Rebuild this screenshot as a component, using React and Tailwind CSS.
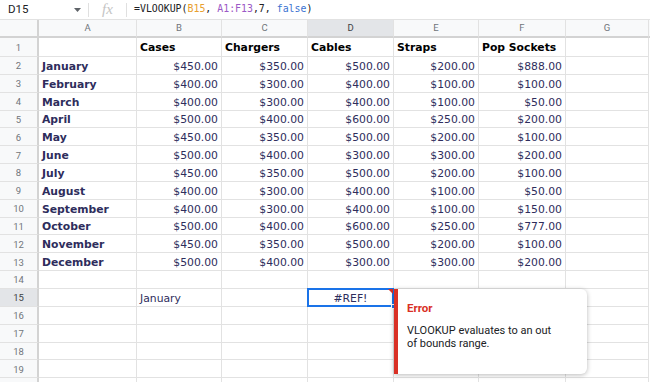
const COLS = [
  { letter: "A", w: "w-[98px]" },
  { letter: "B", w: "w-[85px]" },
  { letter: "C", w: "w-[86px]" },
  { letter: "D", w: "w-[86px]" },
  { letter: "E", w: "w-[85px]" },
  { letter: "F", w: "w-[87px]" },
  { letter: "G", w: "w-[83px]" },
];

const DATA = [
  ["January", 450, 350, 500, 200, 888],
  ["February", 400, 300, 400, 100, 100],
  ["March", 400, 300, 400, 100, 50],
  ["April", 500, 400, 600, 250, 200],
  ["May", 450, 350, 500, 200, 100],
  ["June", 500, 400, 300, 300, 200],
  ["July", 450, 350, 500, 200, 100],
  ["August", 400, 300, 400, 100, 50],
  ["September", 400, 300, 400, 100, 150],
  ["October", 500, 400, 600, 250, 777],
  ["November", 450, 350, 500, 200, 100],
  ["December", 500, 400, 300, 300, 200],
];

const money = (n) => `$${n.toFixed(2)}`;

const RowHead = ({ n, active }) => (
  <div
    className={`w-[39px] shrink-0 flex items-center justify-center pt-[2px] border-r-2 border-b border-r-[#d3d3d3] border-b-[#e2e2e2] text-[9.5px] font-['Roboto',sans-serif] ${
      active ? "bg-[#e3e5e8] text-[#3c4043]" : "bg-[#f8f9fa] text-[#70757a]"
    }`}
  >
    {n}
  </div>
);

const Cell = ({ w, children, align = "left", bold, dark, center, extra = "" }) => (
  <div
    className={`${w} shrink-0 h-full flex items-center border-r border-b border-[#e2e2e2] px-[3px] pt-[3px] whitespace-nowrap overflow-visible ${
      center ? "justify-center" : align === "right" ? "justify-end" : "justify-start"
    } ${bold ? "font-bold" : ""} ${dark ? "text-black" : "text-[#2e2d5c]"} ${extra}`}
  >
    {children}
  </div>
);

export default function App() {
  const rows = [];

  // header row (row 1)
  rows.push(
    <div key="r1" className="flex h-[19px]">
      <RowHead n={1} />
      <Cell w={COLS[0].w} />
      {["Cases", "Chargers", "Cables", "Straps", "Pop Sockets"].map((h, i) => (
        <Cell key={h} w={COLS[i + 1].w} bold dark>
          {h}
        </Cell>
      ))}
      <Cell w={COLS[6].w} />
    </div>
  );

  DATA.forEach((r, idx) => {
    rows.push(
      <div key={`r${idx + 2}`} className="flex h-[17.85px]">
        <RowHead n={idx + 2} />
        <Cell w={COLS[0].w} bold>
          {r[0]}
        </Cell>
        {r.slice(1).map((v, i) => (
          <Cell key={i} w={COLS[i + 1].w} align="right">
            {money(v)}
          </Cell>
        ))}
        <Cell w={COLS[6].w} />
      </div>
    );
  });

  for (let n = 14; n <= 20; n++) {
    rows.push(
      <div key={`r${n}`} className="flex h-[17.85px]">
        <RowHead n={n < 20 ? n : ""} active={n === 15} />
        <Cell w={COLS[0].w} />
        <Cell w={COLS[1].w}>{n === 15 ? "January" : null}</Cell>
        <Cell w={COLS[2].w} />
        {n === 15 ? (
          <Cell w={COLS[3].w} center extra="relative">
            #REF!
            <div className="absolute -left-px -top-px -right-px -bottom-px border-2 border-[#1a73e8]" />
            <div className="absolute right-0 top-0 w-0 h-0 border-t-[5px] border-l-[5px] border-t-[#d93025] border-l-transparent" />
            <div className="absolute -right-[3px] -bottom-[3px] w-[5px] h-[5px] bg-[#1a73e8] border border-white" />
          </Cell>
        ) : (
          <Cell w={COLS[3].w} />
        )}
        <Cell w={COLS[4].w} />
        <Cell w={COLS[5].w} />
        <Cell w={COLS[6].w} />
      </div>
    );
  }

  return (
    <div className="relative w-[650px] h-[382px] overflow-hidden bg-white font-['DejaVu_Sans',sans-serif] text-[10.8px]">
      {/* formula bar */}
      <div className="flex items-center h-[20px] border-b border-[#e2e2e2] font-['Roboto',sans-serif]">
        <div className="w-[88px] shrink-0 flex items-center justify-between pl-[8px] pr-[7px] text-[11.5px] text-[#202124]">
          <span>D15</span>
          <svg width="7" height="4" viewBox="0 0 7 4">
            <path d="M0 0h7L3.5 4z" fill="#5f6368" />
          </svg>
        </div>
        <div className="w-px h-[14px] bg-[#e0e0e0]" />
        <div className="w-[37px] shrink-0 flex items-center justify-center font-['Liberation_Serif',serif] italic text-[15px] text-[#c4c4c4] leading-none">
          fx
        </div>
        <div className="w-px h-[14px] bg-[#e0e0e0]" />
        <div className="pl-[7px] font-['DejaVu_Sans_Mono',monospace] text-[9.9px] text-[#202124] whitespace-nowrap">
          =VLOOKUP(<span className="text-[#e8a02f]">B15</span>, <span className="text-[#9c59c6]">A1:F13</span>,7,{" "}
          <span className="text-[#3b72d1]">false</span>)
        </div>
      </div>

      {/* column headers */}
      <div className="flex h-[18px] font-['Roboto',sans-serif] text-[9.5px]">
        <div className="w-[39px] shrink-0 bg-[#f8f9fa] border-r-2 border-b-2 border-[#d3d3d3]" />
        {COLS.map((c) => (
          <div
            key={c.letter}
            className={`${c.w} shrink-0 flex items-center justify-center border-r border-[#e2e2e2] border-b-2 border-b-[#d3d3d3] ${
              c.letter === "D" ? "bg-[#e3e5e8] text-[#3c4043]" : "bg-[#f8f9fa] text-[#70757a]"
            }`}
          >
            {c.letter}
          </div>
        ))}
        <div className="flex-1 bg-[#f8f9fa] border-b-2 border-[#d3d3d3]" />
      </div>

      {rows}

      {/* error popup */}
      <div className="absolute left-[394px] top-[289px] w-[193px] h-[85px] flex bg-white rounded-r-[6px] shadow-[0_1px_5px_rgba(0,0,0,0.28)] font-['Roboto',sans-serif]">
        <div className="w-[4px] shrink-0 bg-[#d93025]" />
        <div className="pl-[9px] pt-[12px] w-[160px]">
          <div className="text-[11.5px] font-bold text-[#d93025] leading-[14px]">Error</div>
          <div className="mt-[9px] text-[11px] text-[#202124] leading-[13px]">
            VLOOKUP evaluates to an out of bounds range.
          </div>
        </div>
      </div>
    </div>
  );
}
